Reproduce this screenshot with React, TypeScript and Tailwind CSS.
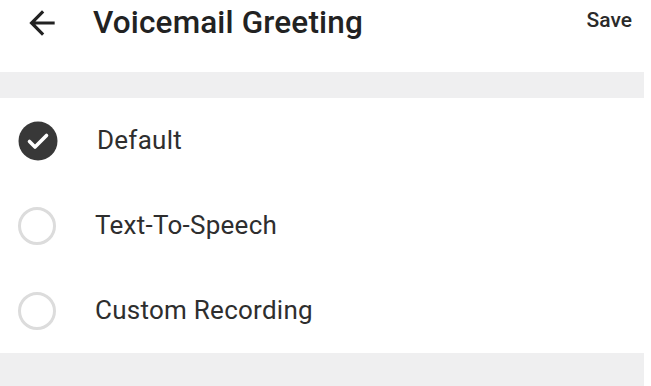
const options = [
  { id: "default", label: "Default" },
  { id: "tts", label: "Text-To-Speech" },
  { id: "custom", label: "Custom Recording" },
];

function BackArrow() {
  return (
    <svg width="38" height="38" viewBox="0 0 24 24" fill="#222">
      <path d="M20 11H7.83l5.59-5.59L12 4l-8 8 8 8 1.41-1.41L7.83 13H20v-2z" />
    </svg>
  );
}

function CheckCircle() {
  return (
    <svg width="40" height="40" viewBox="0 0 40 40">
      <circle cx="20" cy="20" r="19.5" fill="#383838" />
      <path d="M11.5 20.5l5.5 5.5 11.5-11.5" fill="none" stroke="#fff" strokeWidth="3.6" strokeLinecap="round" strokeLinejoin="round" />
    </svg>
  );
}

export default function App() {
  const selected = "default";
  return (
    <div className="flex h-[386px] w-[651px] flex-col overflow-hidden bg-white pr-[7px] font-['Roboto',sans-serif] text-[#262626]">
      <header className="h-[72px]">
        <div className="flex h-[45px] items-center pl-[23px] pr-[12px]">
          <BackArrow />
          <h1 className="ml-[32px] flex-1 text-[31.5px] font-medium tracking-[0.005em] text-[#222]">Voicemail Greeting</h1>
          <button className="-mt-[3px] text-[21px] font-medium text-[#2a2a2a]">Save</button>
        </div>
      </header>
      <div className="h-[26px] bg-[#efeff0]" />
      <ul>
        {options.map((o) => (
          <li key={o.id} className="flex h-[85px] items-center pl-[18px]">
            {o.id === selected ? (
              <CheckCircle />
            ) : (
              <span className="block h-[38px] w-[38px] rounded-full border-[3px] border-[#dcdcdc]" />
            )}
            <span className="ml-[39px] text-[26px] tracking-[0.01em] text-[#2e2e2e]">{o.label}</span>
          </li>
        ))}
      </ul>
      <div className="flex-1 bg-[#efeff0]" />
    </div>
  );
}
